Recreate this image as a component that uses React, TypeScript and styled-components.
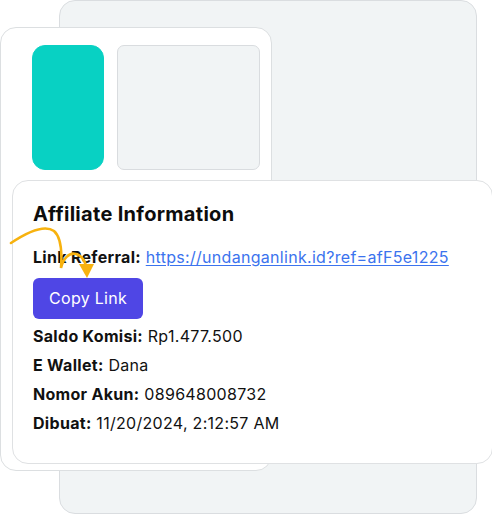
import React from "react";
import styled, { createGlobalStyle } from "styled-components";

const Global = createGlobalStyle`
  html, body { margin: 0; padding: 0; background: #ffffff; }
  body { font-family: Inter, "Noto Sans", sans-serif; color: #111; }
`;

const Stage = styled.div`
  position: relative;
  width: 492px;
  height: 515px;
  overflow: hidden;
`;

const BackCard = styled.div`
  position: absolute;
  left: 59px;
  top: 0;
  width: 418px;
  height: 514px;
  box-sizing: border-box;
  background: #f1f4f5;
  border: 1px solid #dadde0;
  border-radius: 16px;
`;

const MiddleCard = styled.div`
  position: absolute;
  left: 0;
  top: 27px;
  width: 272px;
  height: 444px;
  box-sizing: border-box;
  background: #ffffff;
  border: 1px solid #dcdfe1;
  border-radius: 16px;
  display: flex;
  align-items: flex-start;
  gap: 13px;
  padding: 17px 11px 0 31px;
`;

const Swatch = styled.div<{ $tone: "teal" | "gray" }>`
  height: 125px;
  box-sizing: border-box;
  flex: ${(p) => (p.$tone === "teal" ? "0 0 72px" : "1 1 auto")};
  background: ${(p) => (p.$tone === "teal" ? "#08d1c3" : "#f1f4f5")};
  border: 1px solid ${(p) => (p.$tone === "teal" ? "#08d1c3" : "#d9dcdf")};
  border-radius: ${(p) => (p.$tone === "teal" ? "13px" : "7px")};
`;

const FrontCard = styled.div`
  position: absolute;
  left: 12px;
  top: 180px;
  width: 481px;
  height: 284px;
  box-sizing: border-box;
  background: #ffffff;
  border: 1px solid #dfe1e3;
  border-radius: 16px;
  padding: 19px 20px 20px 20px;
  display: flex;
  flex-direction: column;
  align-items: flex-start;
  letter-spacing: 0.3px;
`;

const Title = styled.h2`
  margin: 0 0 17px 0;
  font-size: 20px;
  line-height: 28px;
  font-weight: 700;
  color: #0d0d0d;
`;

const Row = styled.div<{ $gap?: number }>`
  font-size: 16px;
  line-height: 24px;
  color: #111;
  margin-bottom: ${(p) => p.$gap ?? 5}px;
  white-space: nowrap;
`;

const Label = styled.span`
  font-weight: 700;
`;

const RefLink = styled.a`
  color: #3b73ee;
  text-decoration: underline;
  text-underline-offset: 2px;
`;

const CopyButton = styled.button`
  font-family: inherit;
  font-size: 16px;
  letter-spacing: 0.3px;
  line-height: 25px;
  padding: 8px 16px;
  margin: 0 0 5px 0;
  background: #4f46e5;
  color: #ffffff;
  border: none;
  border-radius: 6px;
  cursor: pointer;
`;

const ArrowOverlay = styled.svg`
  position: absolute;
  left: 0;
  top: 220px;
  width: 100px;
  height: 65px;
  overflow: visible;
  pointer-events: none;
`;

export default function App() {
  return (
    <>
      <Global />
      <Stage>
        <BackCard />
        <MiddleCard>
          <Swatch $tone="teal" />
          <Swatch $tone="gray" />
        </MiddleCard>
        <FrontCard>
          <Title>Affiliate Information</Title>
          <Row $gap={9}>
            <Label>Link Referral:</Label>{" "}
            <RefLink href="#">https://undanganlink.id?ref=afF5e1225</RefLink>
          </Row>
          <CopyButton>Copy Link</CopyButton>
          <Row>
            <Label>Saldo Komisi:</Label> Rp1.477.500
          </Row>
          <Row>
            <Label>E Wallet:</Label> Dana
          </Row>
          <Row>
            <Label>Nomor Akun:</Label> 089648008732
          </Row>
          <Row>
            <Label>Dibuat:</Label> 11/20/2024, 2:12:57 AM
          </Row>
        </FrontCard>
        <ArrowOverlay viewBox="0 220 100 65">
          <path
            d="M 11 243 C 26 233, 44 224, 54 231 C 62 238, 62 254, 61 268 C 63 259, 69 252, 76 254 C 82 256, 85 261, 86 266"
            fill="none"
            stroke="#f7b20f"
            strokeWidth="2.6"
            strokeLinecap="round"
          />
          <polygon points="79,264 94,264 87,278" fill="#f7b20f" />
        </ArrowOverlay>
      </Stage>
    </>
  );
}
